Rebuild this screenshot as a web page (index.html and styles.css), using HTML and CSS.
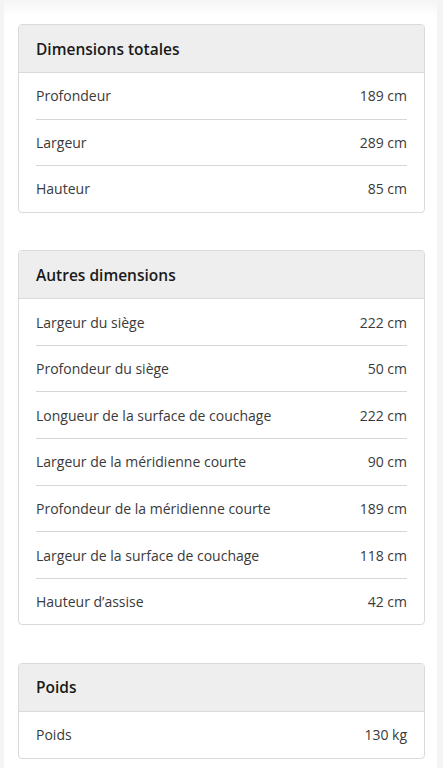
FILE: index.html
```html
<!DOCTYPE html>
<html lang="fr">
<head>
<meta charset="utf-8">
<link rel="stylesheet" href="styles.css">
</head>
<body>
<div class="panel">
  <section class="card">
    <h2 class="card-head">Dimensions totales</h2>
    <ul class="rows">
      <li class="row"><span>Profondeur</span><span>189 cm</span></li>
      <li class="row"><span>Largeur</span><span>289 cm</span></li>
      <li class="row"><span>Hauteur</span><span>85 cm</span></li>
    </ul>
  </section>
  <section class="card">
    <h2 class="card-head">Autres dimensions</h2>
    <ul class="rows">
      <li class="row"><span>Largeur du siège</span><span>222 cm</span></li>
      <li class="row"><span>Profondeur du siège</span><span>50 cm</span></li>
      <li class="row"><span>Longueur de la surface de couchage</span><span>222 cm</span></li>
      <li class="row"><span>Largeur de la méridienne courte</span><span>90 cm</span></li>
      <li class="row"><span>Profondeur de la méridienne courte</span><span>189 cm</span></li>
      <li class="row"><span>Largeur de la surface de couchage</span><span>118 cm</span></li>
      <li class="row"><span>Hauteur d’assise</span><span>42 cm</span></li>
    </ul>
  </section>
  <section class="card">
    <h2 class="card-head">Poids</h2>
    <ul class="rows">
      <li class="row"><span>Poids</span><span>130 kg</span></li>
    </ul>
  </section>
</div>
</body>
</html>
```
FILE: styles.css
```css
html, body {
  margin: 0;
  padding: 0;
  background: #f4f4f4;
}
body {
  font-family: "Open Sans", Lato, sans-serif;
  color: #333;
}
.panel {
  margin: 0 6px 0 4px;
  background: #fff;
  padding: 24px 12px 11px 14px;
  display: flex;
  flex-direction: column;
  gap: 37.5px;
  min-height: 733px;
  background-image: linear-gradient(#f5f5f5, #fff 16px);
}
.card {
  border: 1px solid #dadada;
  border-radius: 4px;
  overflow: hidden;
  background: #fff;
}
.card-head {
  margin: 0;
  height: 47px;
  display: flex;
  align-items: center;
  padding: 0 17px;
  background: #eeeeee;
  border-bottom: 1px solid #dadada;
  font-size: 15.5px;
  font-weight: 600;
  color: #1a1a1a;
}
.rows {
  list-style: none;
  margin: 0;
  padding: 0 17px;
}
.row {
  display: flex;
  justify-content: space-between;
  align-items: center;
  height: 45.6px;
  border-bottom: 1px solid #d6d6d6;
  font-size: 14px;
  color: #3a3a3a;
}
.row:last-child {
  border-bottom: none;
}
```
